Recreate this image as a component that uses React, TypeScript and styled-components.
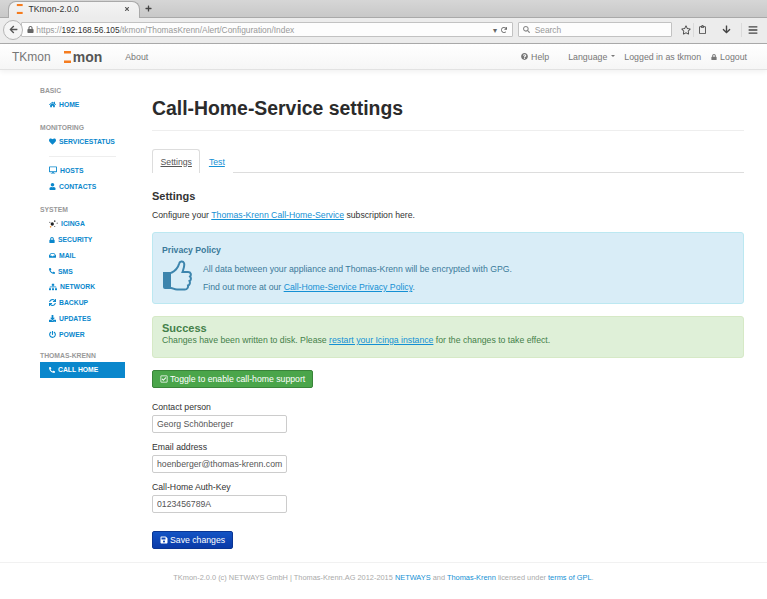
import React from 'react';
import styled, { createGlobalStyle } from 'styled-components';
import {
  FaArrowLeft, FaArrowDown, FaDownload, FaHome, FaHeart, FaDesktop, FaUser, FaLock, FaInbox, FaPhoneAlt,
  FaSitemap, FaSync, FaPowerOff, FaQuestionCircle, FaSave, FaRegCheckSquare, FaRegStar, FaBars, FaPlus, FaTimes, FaSearch, FaRedo, FaRegClipboard,
} from 'react-icons/fa';

const GlobalStyle = createGlobalStyle`
  html, body { margin: 0; padding: 0; background: #fff; }
  body { font-family: "Liberation Sans", Arial, sans-serif; font-size: 8.7px; color: #333; width: 767px; height: 599px; overflow: hidden; }
  * { box-sizing: border-box; }
`;

const TabStrip = styled.div`
  height: 18px;
  background: linear-gradient(#d6d6d6, #c8c8c8);
  border-bottom: 1px solid #a9a9a9;
  display: flex;
  align-items: flex-end;
  padding-left: 8px;
  gap: 5px;
`;
const BrowserTab = styled.div`
  width: 132px;
  height: 17px;
  margin-bottom: -1px;
  background: linear-gradient(#f4f4f4, #ececec);
  border: 1px solid #a9a9a9;
  border-bottom: none;
  border-radius: 8px 8px 0 0;
  display: flex;
  align-items: center;
  padding: 0 9px 2px 7px;
  font-size: 8.7px;
  color: #333;
  svg { flex: none; }
  span { margin-left: 5px; flex: 1; }
`;
const NewTab = styled.div`
  height: 17px;
  display: flex;
  align-items: center;
  color: #444;
`;
const UrlBar = styled.div`
  height: 26px;
  background: #ececec;
  border-bottom: 1px solid #ababab;
  display: flex;
  align-items: center;
  padding: 0 4px 2px 3px;
`;
const BackButton = styled.div`
  width: 20px;
  height: 20px;
  border-radius: 50%;
  background: #f5f5f5;
  border: 1px solid #b5b5b5;
  display: flex;
  align-items: center;
  justify-content: center;
  color: #555;
  flex: none;
  z-index: 1;
`;
const Field = styled.div<{ $width: number }>`
  width: ${(p) => p.$width}px;
  height: 15px;
  margin-left: ${(p) => (p.$width > 300 ? -2 : 5)}px;
  background: #fdfdfd;
  border: 1px solid #c2c2c2;
  border-radius: 1px;
  display: flex;
  align-items: center;
  padding: 0 5px 0 ${(p) => (p.$width > 300 ? 5 : 4)}px;
  font-size: 8.4px;
  color: #999;
  flex: none;
  white-space: nowrap;
  b { font-weight: normal; color: #333; }
`;
const FieldEnd = styled.div`
  margin-left: auto;
  display: flex;
  align-items: center;
  gap: 4px;
  color: #666;
`;
const BrowserTools = styled.div`
  display: flex;
  align-items: center;
  margin-left: 6px;
  color: #444;
`;
const ToolCell = styled.div<{ $width: number; $divider?: boolean }>`
  width: ${(p) => p.$width}px;
  height: 14px;
  display: flex;
  align-items: center;
  justify-content: center;
  border-left: ${(p) => (p.$divider ? '1px solid #dadada' : 'none')};
`;
const Navbar = styled.header`
  height: 26px;
  background: linear-gradient(#fff, #f6f6f6);
  border-bottom: 1px solid #e2e2e2;
  box-shadow: 0 2px 5px rgba(0, 0, 0, .06);
  display: flex;
  align-items: center;
  padding: 0 20px 0 12px;
  color: #777;
  font-size: 8.8px;
`;
const Brand = styled.div`
  font-size: 12px;
  color: #777;
`;
const Logo = styled.div`
  margin-left: 12px;
  display: flex;
  align-items: center;
  font-weight: bold;
  font-size: 14px;
  color: #555;
  gap: 1px;
`;
const NavLink = styled.div<{ $gap?: number; $push?: boolean }>`
  margin-left: ${(p) => (p.$push ? 'auto' : `${p.$gap ?? 0}px`)};
  display: flex;
  align-items: center;
  gap: 3px;
  white-space: nowrap;
`;
const Caret = styled.i`
  width: 0;
  height: 0;
  margin: 0 0 2px 1px;
  border: 2.500px solid transparent;
  border-top-color: #777;
  border-bottom: none;
`;
const Body = styled.div`
  display: flex;
  height: 492px;
`;
const Sidebar = styled.nav`
  width: 152px;
  flex: none;
  padding: 16px 27px 0 40px;
`;
const SectionTitle = styled.div<{ $top?: number }>`
  font-size: 6.8px;
  font-weight: bold;
  color: #999;
  line-height: 9px;
  margin-bottom: 2px;
  margin-top: ${(p) => p.$top ?? 10}px;
  &:first-child { margin-top: 0; }
`;
const SideItem = styled.a<{ $active?: boolean }>`
  display: flex;
  align-items: center;
  gap: 3px;
  height: 15.750px;
  padding-left: 9px;
  font-size: 6.8px;
  font-weight: bold;
  color: ${(p) => (p.$active ? '#fff' : '#0a87cc')};
  background: ${(p) => (p.$active ? '#0a87cc' : 'transparent')};
  svg { flex: none; }
`;
const SideRule = styled.hr`
  margin: 6px 9px 6px 9px;
  border: none;
  border-top: 1px solid #eee;
`;
const Main = styled.main`
  width: 592px;
  flex: none;
`;
const Title = styled.h1`
  margin: 26px 0 0;
  padding-bottom: 10px;
  font-size: 19.4px;
  line-height: 24px;
  font-weight: bold;
  color: #2b2b2b;
  border-bottom: 1px solid #eee;
`;
const Tabs = styled.div`
  display: flex;
  margin-top: 18px;
  height: 24px;
  border-bottom: 1px solid #ddd;
`;
const TabItem = styled.div<{ $active?: boolean }>`
  height: 24px;
  padding: 0 7.500px;
  display: flex;
  align-items: center;
  font-size: 8.7px;
  text-decoration: underline;
  color: ${(p) => (p.$active ? '#555' : '#1490d4')};
  background: #fff;
  border: 1px solid ${(p) => (p.$active ? '#ddd' : 'transparent')};
  border-bottom: none;
  border-radius: 3px 3px 0 0;
`;
const SubTitle = styled.h2`
  margin: 17px 0 0;
  font-size: 11px;
  line-height: 13px;
  font-weight: bold;
  color: #333;
`;
const Paragraph = styled.p`
  margin: 6px 0 0;
  font-size: 8.7px;
  line-height: 12px;
`;
const Link = styled.a`
  color: #1490d4;
  text-decoration: underline;
`;
const InfoBox = styled.section`
  margin-top: 11px;
  height: 72px;
  background: #d9edf7;
  border: 1px solid #bce8f1;
  border-radius: 3px;
  padding: 11px 9px 0;
  color: #3a7a9a;
`;
const InfoTitle = styled.div`
  font-size: 8.7px;
  font-weight: bold;
  line-height: 12px;
`;
const InfoRow = styled.div`
  display: flex;
  gap: 11px;
  margin-top: 3px;
`;
const InfoText = styled.div`
  font-size: 8.7px;
  line-height: 12px;
  padding-top: 4px;
  p { margin: 0 0 6px; }
`;
const SuccessBox = styled.section`
  margin-top: 12px;
  height: 42px;
  background: #dff0d8;
  border: 1px solid #d6e9c6;
  border-radius: 3px;
  padding: 5px 9px 0;
  color: #44804a;
  font-size: 8.7px;
  line-height: 11px;
`;
const SuccessTitle = styled.div`
  font-size: 11px;
  font-weight: bold;
  line-height: 13px;
`;
const Button = styled.button<{ $tone: 'green' | 'blue' }>`
  display: flex;
  align-items: center;
  gap: 2px;
  height: 18px;
  padding: 0 7px;
  font: 8.7px "Liberation Sans", Arial, sans-serif;
  color: #fff;
  background: ${(p) => (p.$tone === 'green' ? '#4aa54a' : 'linear-gradient(#1353c4, #0a3aa8)')};
  border: 1px solid ${(p) => (p.$tone === 'green' ? '#398439' : '#0a3593')};
  border-radius: 2px;
`;
const ToggleWrap = styled.div`
  margin-top: 12px;
`;
const Form = styled.form`
  margin-top: 13px;
  display: flex;
  flex-direction: column;
`;
const Label = styled.label`
  font-size: 8.7px;
  line-height: 12px;
  color: #333;
`;
const Input = styled.input`
  display: block;
  width: 135px;
  height: 18px;
  margin: 2px 0 8px;
  padding: 0 0 0 4px;
  font: 8.7px "Liberation Sans", Arial, sans-serif;
  color: #555;
  background: #fff;
  border: 1px solid #ccc;
  border-radius: 2px;
`;
const SaveWrap = styled.div`
  margin-top: 10px;
`;
const Footer = styled.footer`
  border-top: 1px solid #f1f1f1;
  height: 37px;
  padding-top: 10px;
  text-align: center;
  font-size: 7.4px;
  color: #aaa;
  a { color: #1490d4; }
`;

const OrangeMark = ({ size }: { size: number }) => (
  <svg width={size * 0.75} height={size} viewBox="0 0 9 12">
    <rect x="1" y="0" width="7" height="2.500" fill="#f57c1f" />
    <rect x="1" y="9.500" width="7" height="2.500" fill="#f57c1f" />
  </svg>
);

const ThumbIcon = () => (
  <svg width="30" height="32" viewBox="0 0 30 32">
    <path d="M1 13h8v17H3a2 2 0 0 1-2-2z" fill="#3d85ad" />
    <path
      d="M9 14c4-2 7-5 8-9 .5-3 4-3.500 5-1 1 3-.5 6-1.500 9h5.500c3 0 3.500 3 2 4.500 1.500 1.500 1 4-.5 4.500 1 2 0 4-1.500 4.500 .5 2-1 4-3 4H15c-3 0-4-1.500-6-1.500"
      fill="none"
      stroke="#3d85ad"
      strokeWidth="2"
    />
  </svg>
);

const IcingaIcon = () => (
  <svg width="9" height="10" viewBox="0 0 11 10">
    <circle cx="4" cy="5" r="2" fill="#222" />
    <circle cx="7" cy="1.500" r="1" fill="#444" />
    <circle cx="10" cy="4" r=".7" fill="#555" />
    <circle cx="1" cy="3" r=".7" fill="#555" />
    <circle cx="2" cy="8.500" r="1" fill="#f08a24" />
    <circle cx="7" cy="8" r=".7" fill="#555" />
  </svg>
);

const App = () => (
  <>
    <GlobalStyle />
    <TabStrip>
      <BrowserTab>
        <OrangeMark size={10} />
        <span>TKmon-2.0.0</span>
        <FaTimes size={6} color="#555" />
      </BrowserTab>
      <NewTab><FaPlus size={7} /></NewTab>
    </TabStrip>
    <UrlBar>
      <BackButton><FaArrowLeft size={9} /></BackButton>
      <Field $width={492}>
        <FaLock size={7} color="#666" />
        <span>&nbsp;https://<b>192.168.56.105</b>/tkmon/ThomasKrenn/Alert/Configuration/Index</span>
        <FieldEnd><span>▾</span><FaRedo size={6} /></FieldEnd>
      </Field>
      <Field $width={154}>
        <FaSearch size={7} color="#888" />
        <span>&nbsp;&nbsp;Search</span>
      </Field>
      <BrowserTools>
        <ToolCell $width={15}><FaRegStar size={10} /></ToolCell>
        <ToolCell $width={18} $divider><FaRegClipboard size={9} /></ToolCell>
        <ToolCell $width={30}><FaArrowDown size={9} /></ToolCell>
        <ToolCell $width={22} $divider><FaBars size={10} /></ToolCell>
      </BrowserTools>
    </UrlBar>
    <Navbar>
      <Brand>TKmon</Brand>
      <Logo><OrangeMark size={12} />mon</Logo>
      <NavLink $gap={23}>About</NavLink>
      <NavLink $push><FaQuestionCircle size={7} /> Help</NavLink>
      <NavLink $gap={19}>Language<Caret /></NavLink>
      <NavLink $gap={9}>Logged in as tkmon</NavLink>
      <NavLink $gap={10}><FaLock size={6} />Logout</NavLink>
    </Navbar>
    <Body>
      <Sidebar>
        <SectionTitle>BASIC</SectionTitle>
        <SideItem><FaHome size={7} />HOME</SideItem>
        <SectionTitle>MONITORING</SectionTitle>
        <SideItem><FaHeart size={7} />SERVICESTATUS</SideItem>
        <SideRule />
        <SideItem><FaDesktop size={8} />HOSTS</SideItem>
        <SideItem><FaUser size={7} />CONTACTS</SideItem>
        <SectionTitle $top={11}>SYSTEM</SectionTitle>
        <SideItem><IcingaIcon />ICINGA</SideItem>
        <SideItem><FaLock size={6} />SECURITY</SideItem>
        <SideItem><FaInbox size={7} />MAIL</SideItem>
        <SideItem><FaPhoneAlt size={6} />SMS</SideItem>
        <SideItem><FaSitemap size={8} />NETWORK</SideItem>
        <SideItem><FaSync size={7} />BACKUP</SideItem>
        <SideItem><FaDownload size={7} />UPDATES</SideItem>
        <SideItem><FaPowerOff size={7} />POWER</SideItem>
        <SectionTitle $top={9}>THOMAS-KRENN</SectionTitle>
        <SideItem $active><FaPhoneAlt size={6} />CALL HOME</SideItem>
      </Sidebar>
      <Main>
        <Title>Call-Home-Service settings</Title>
        <Tabs>
          <TabItem $active>Settings</TabItem>
          <TabItem>Test</TabItem>
        </Tabs>
        <SubTitle>Settings</SubTitle>
        <Paragraph>Configure your <Link>Thomas-Krenn Call-Home-Service</Link> subscription here.</Paragraph>
        <InfoBox>
          <InfoTitle>Privacy Policy</InfoTitle>
          <InfoRow>
            <ThumbIcon />
            <InfoText>
              <p>All data between your appliance and Thomas-Krenn will be encrypted with GPG.</p>
              <p>Find out more at our <Link>Call-Home-Service Privacy Policy</Link>.</p>
            </InfoText>
          </InfoRow>
        </InfoBox>
        <SuccessBox>
          <SuccessTitle>Success</SuccessTitle>
          Changes have been written to disk. Please <Link>restart your Icinga instance</Link> for the changes to take effect.
        </SuccessBox>
        <ToggleWrap>
          <Button type="button" $tone="green"><FaRegCheckSquare size={8} /> Toggle to enable call-home support</Button>
        </ToggleWrap>
        <Form>
          <Label>Contact person</Label>
          <Input readOnly value="Georg Schönberger" />
          <Label>Email address</Label>
          <Input readOnly value="hoenberger@thomas-krenn.com" />
          <Label>Call-Home Auth-Key</Label>
          <Input readOnly value="0123456789A" />
        </Form>
        <SaveWrap>
          <Button type="button" $tone="blue"><FaSave size={8} /> Save changes</Button>
        </SaveWrap>
      </Main>
    </Body>
    <Footer>
      TKmon-2.0.0 (c) NETWAYS GmbH | Thomas-Krenn.AG 2012-2015 <a>NETWAYS</a> and <a>Thomas-Krenn</a> licensed under <a>terms of GPL</a>.
    </Footer>
  </>
);

export default App;
